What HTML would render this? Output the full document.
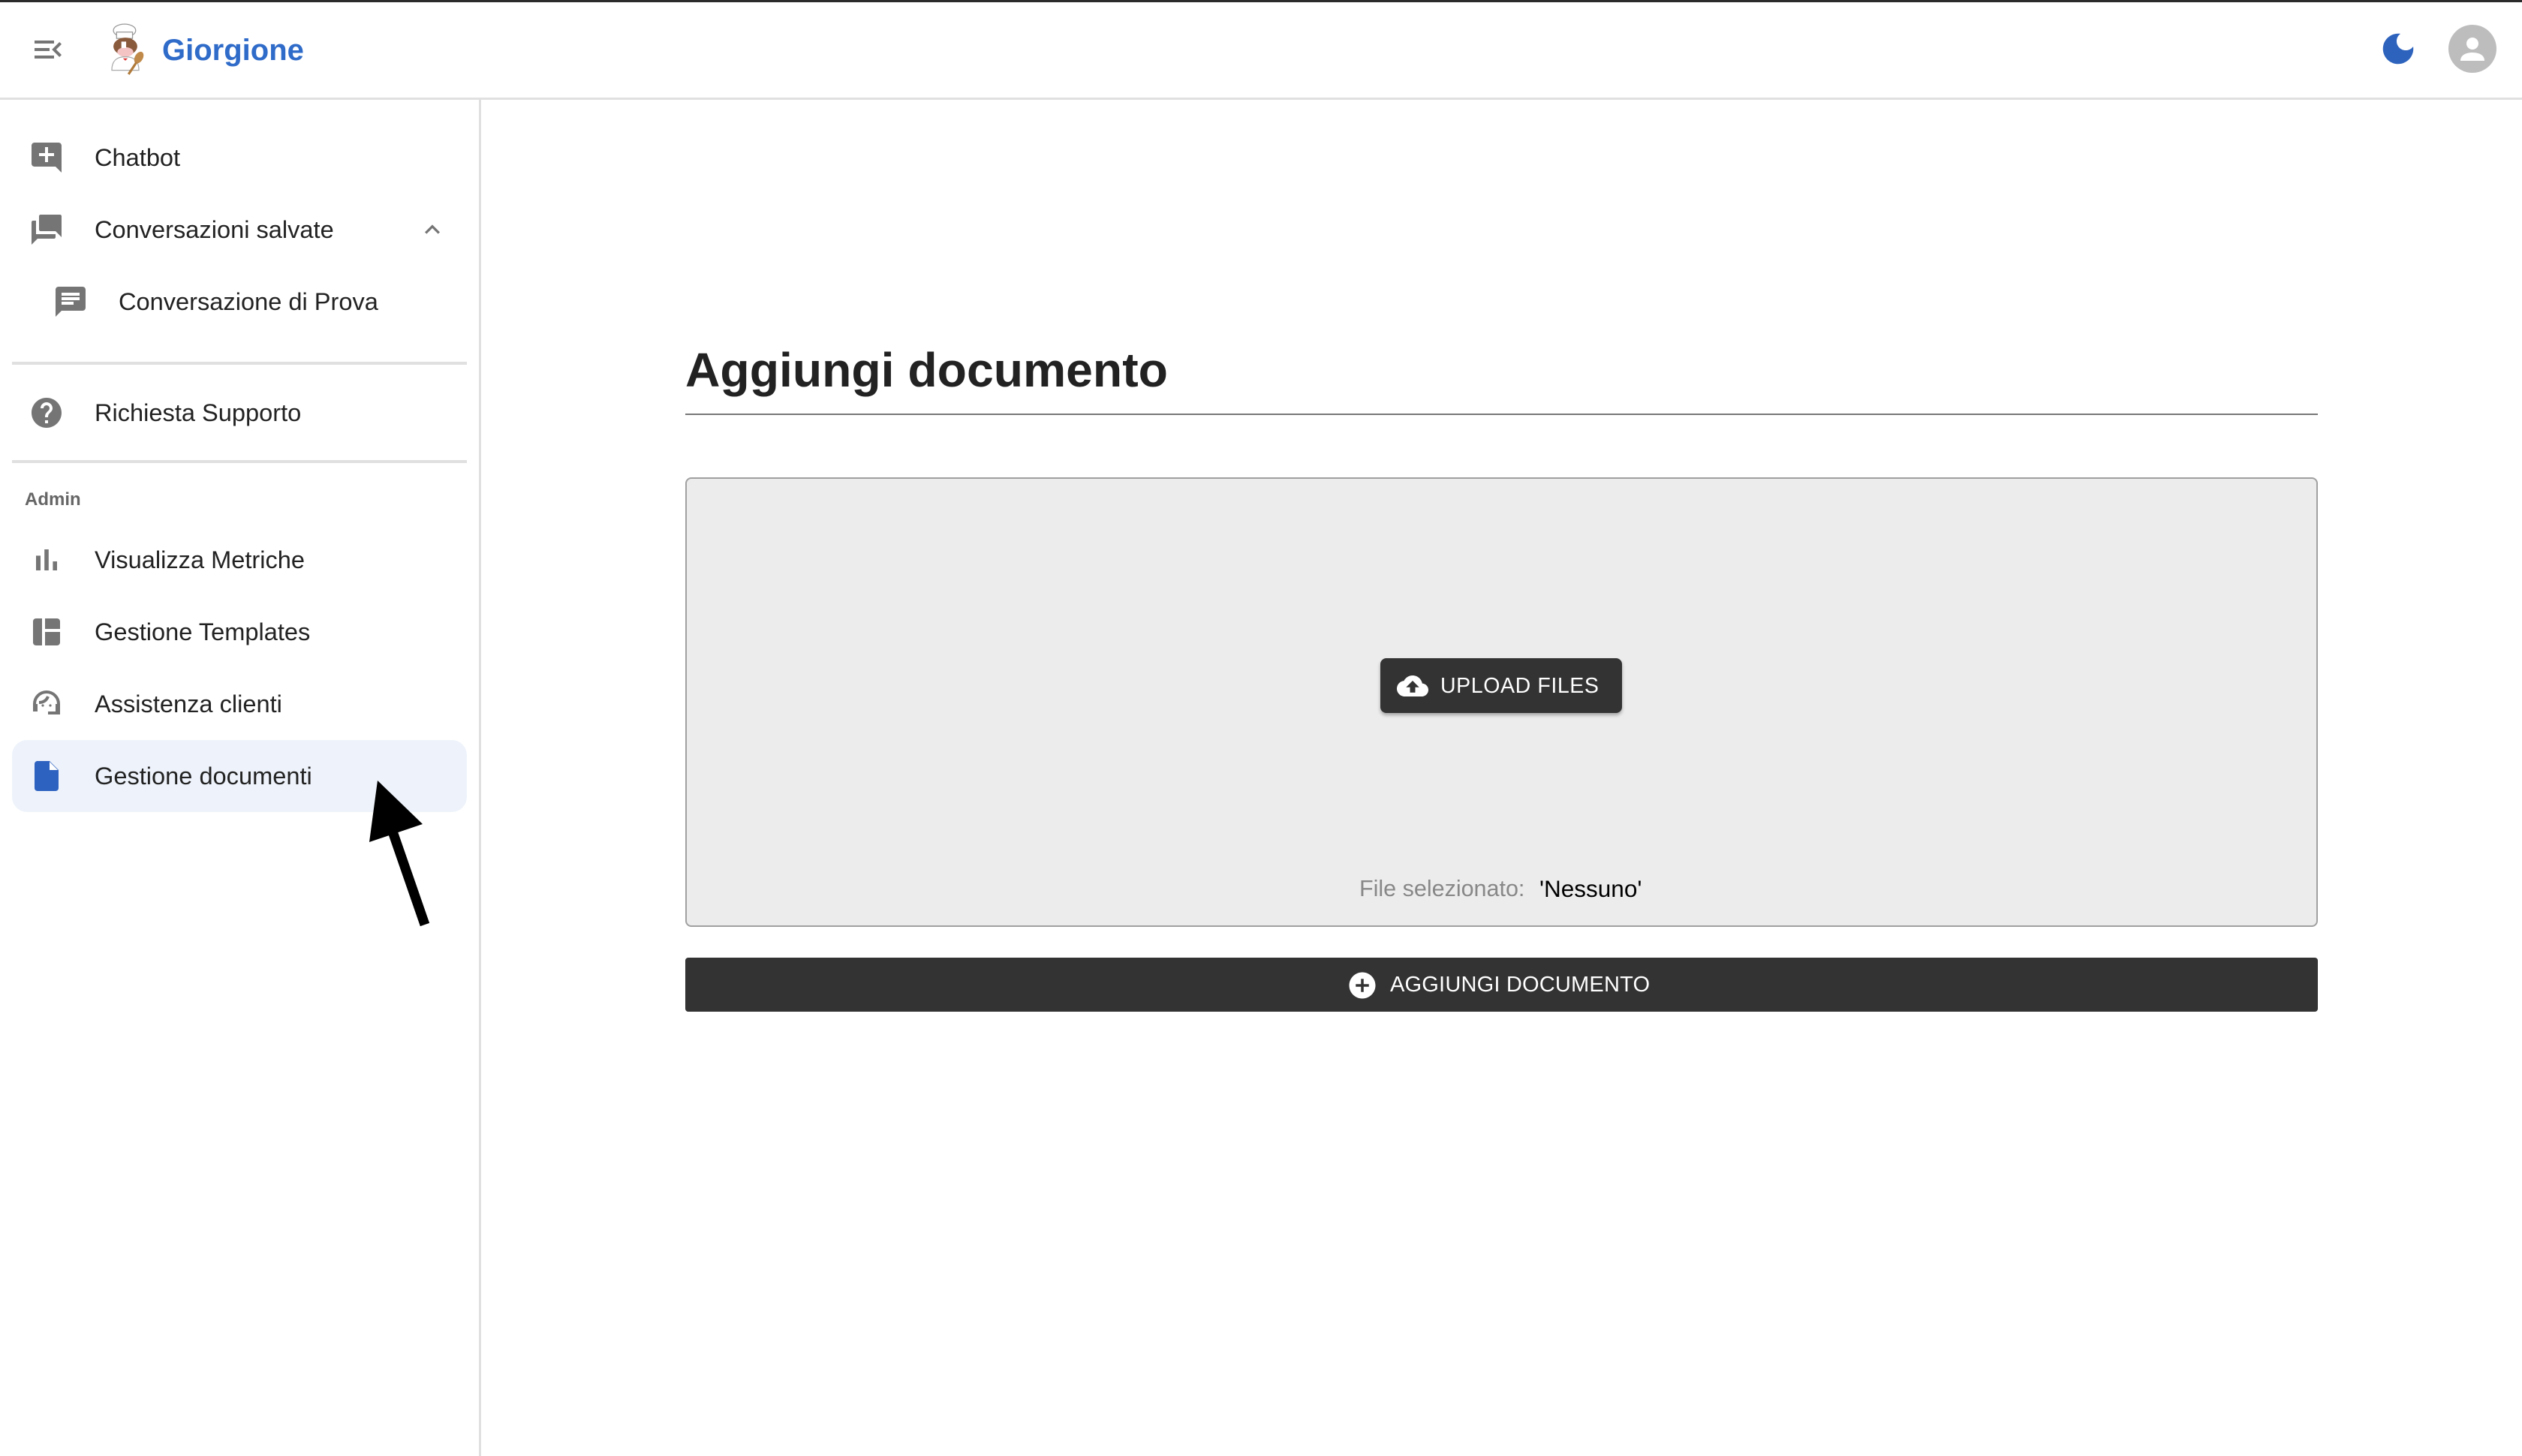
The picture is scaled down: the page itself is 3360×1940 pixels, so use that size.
<!DOCTYPE html>
<html><head><meta charset="utf-8"><style>
*{margin:0;padding:0;box-sizing:border-box}
body{width:3360px;height:1940px;background:#fff;font-family:"Liberation Sans",Arial,sans-serif;position:relative;overflow:hidden;color:#222}
.a{position:absolute}
.t{position:absolute;font-size:32.6px;line-height:40px;color:#222;white-space:nowrap}
svg.i{position:absolute;width:48px;height:48px;fill:#757575}
</style></head><body>
<div class="a" style="left:0;top:0;width:3360px;height:3px;background:#2b2b2b"></div>
<div class="a" style="left:0;top:130px;width:3360px;height:3px;background:#e0e0e0"></div>
<div class="a" style="left:638px;top:130px;width:3px;height:1810px;background:#e0e0e0"></div>

<svg class="i" style="left:40px;top:42px" viewBox="0 0 24 24"><path d="M3 18h13v-2H3v2zm0-5h10v-2H3v2zm0-7v2h13V6H3zm18 9.59L17.42 12 21 8.41 19.59 7l-5 5 5 5L21 15.59z"/></svg>
<svg class="a" style="left:138px;top:30px" width="58" height="70" viewBox="0 0 54 66">
<ellipse cx="26" cy="10" rx="14" ry="8" fill="#fff" stroke="#999" stroke-width="1.2"/>
<rect x="16" y="12" width="20" height="8" fill="#fff" stroke="#999" stroke-width="1.2"/>
<ellipse cx="27" cy="30" rx="15" ry="11" fill="#8a5a3c"/>
<ellipse cx="27" cy="37" rx="10" ry="6" fill="#f4c4c4"/>
<rect x="22" y="24" width="6" height="8" fill="#fff"/>
<path d="M10 60c0-12 6-17 17-17s17 5 17 17z" fill="#fff" stroke="#aaa" stroke-width="1.2"/>
<path d="M24 45l3 3 3-3z" fill="#d33"/>
<ellipse cx="44" cy="44" rx="5" ry="8" fill="#c08a4a" transform="rotate(30 44 44)"/>
<path d="M41 50l-10 15" stroke="#b07a3a" stroke-width="3"/>
</svg>
<div class="a" style="left:216px;top:42px;font-size:40px;line-height:50px;font-weight:bold;color:#2f6bc9">Giorgione</div>

<svg class="a" style="left:3168px;top:38px" width="54" height="54" viewBox="0 0 24 24" fill="#2e63bd"><path d="M12 3c-4.97 0-9 4.03-9 9s4.03 9 9 9 9-4.03 9-9c0-.46-.04-.92-.1-1.36-.98 1.37-2.58 2.26-4.4 2.26-2.98 0-5.4-2.42-5.4-5.4 0-1.81.89-3.42 2.26-4.4-.44-.06-.9-.1-1.36-.1z"/></svg>
<svg class="a" style="left:3262px;top:33px" width="64" height="64" viewBox="0 0 64 64"><circle cx="32" cy="32" r="32" fill="#bdbdbd"/><circle cx="32" cy="25" r="8" fill="#fff"/><path d="M16 48c0-8 8-11 16-11s16 3 16 11z" fill="#fff"/></svg>

<svg class="i" style="left:38px;top:186px;transform:scaleX(-1)" viewBox="0 0 24 24"><path d="M20 2H4c-1.1 0-1.99.9-1.99 2L2 22l4-4h14c1.1 0 2-.9 2-2V4c0-1.1-.9-2-2-2zm-3 9h-4v4h-2v-4H7V9h4V5h2v4h4v2z"/></svg>
<div class="t" style="left:126px;top:190px">Chatbot</div>

<svg class="i" style="left:38px;top:282px;transform:scaleX(-1)" viewBox="0 0 24 24"><path d="M21 6h-2v9H6v2c0 .55.45 1 1 1h11l4 4V7c0-.55-.45-1-1-1zm-4 6V3c0-.55-.45-1-1-1H3c-.55 0-1 .45-1 1v14l4-4h10c.55 0 1-.45 1-1z"/></svg>
<div class="t" style="left:126px;top:286px">Conversazioni salvate</div>
<svg class="a" style="left:556px;top:286px" width="40" height="40" viewBox="0 0 24 24" fill="#757575"><path d="M12 8l-6 6 1.41 1.41L12 10.83l4.59 4.58L18 14z"/></svg>

<svg class="i" style="left:70px;top:378px" viewBox="0 0 24 24"><path d="M20 2H4c-1.1 0-1.99.9-1.99 2L2 22l4-4h14c1.1 0 2-.9 2-2V4c0-1.1-.9-2-2-2zM6 9h12v2H6V9zm8 5H6v-2h8v2zm4-6H6V6h12v2z"/></svg>
<div class="t" style="left:158px;top:382px">Conversazione di Prova</div>

<div class="a" style="left:16px;top:482px;width:606px;height:4px;background:#e0e0e0"></div>

<svg class="i" style="left:38px;top:526px" viewBox="0 0 24 24"><path d="M12 2C6.48 2 2 6.48 2 12s4.48 10 10 10 10-4.48 10-10S17.52 2 12 2zm1 17h-2v-2h2v2zm2.07-7.75-.9.92C13.45 12.9 13 13.5 13 15h-2v-.5c0-1.1.45-2.1 1.17-2.830l1.24-1.26c.37-.36.59-.86.59-1.41 0-1.1-.9-2-2-2s-2 .9-2 2H8c0-2.21 1.79-4 4-4s4 1.79 4 4c0 .88-.36 1.68-.93 2.25z"/></svg>
<div class="t" style="left:126px;top:530px">Richiesta Supporto</div>

<div class="a" style="left:16px;top:613px;width:606px;height:4px;background:#e0e0e0"></div>

<div class="a" style="left:33px;top:652px;font-size:24px;line-height:28px;font-weight:bold;color:#666">Admin</div>

<svg class="i" style="left:38px;top:722px" viewBox="0 0 24 24"><path d="M5 9.2h3V19H5zM10.6 5h2.8v14h-2.8zm5.6 8H19v6h-2.8z"/></svg>
<div class="t" style="left:126px;top:726px">Visualizza Metriche</div>

<svg class="i" style="left:38px;top:818px" viewBox="0 0 24 24"><path d="M9 21H5c-1.1 0-2-.9-2-2V5c0-1.1.9-2 2-2h4v18zm2 0h8c1.1 0 2-.9 2-2v-7h-10v9zm10-11V5c0-1.1-.9-2-2-2h-8v7h10z"/></svg>
<div class="t" style="left:126px;top:822px">Gestione Templates</div>

<svg class="a" style="left:38px;top:914px" width="48" height="48" viewBox="0 0 24 24" fill="none" stroke="#757575" stroke-width="2"><path d="M4 14v-2a8 8 0 0 1 16 0v2"/><path d="M7 11c3 0 5-1.5 6-4"/><rect x="3" y="12" width="3" height="5" fill="#757575" stroke="none"/><rect x="18" y="12" width="3" height="5" fill="#757575" stroke="none"/><path d="M20 16v2h-7"/><circle cx="9.5" cy="13" r=".8" fill="#757575" stroke="none"/><circle cx="14.5" cy="13" r=".8" fill="#757575" stroke="none"/></svg>
<div class="t" style="left:126px;top:918px">Assistenza clienti</div>

<div class="a" style="left:16px;top:986px;width:606px;height:96px;background:#eef3fb;border-radius:20px"></div>
<svg class="i" style="left:38px;top:1010px" viewBox="0 0 24 24"><path fill="#2e62c0" d="M14 2H6c-1.1 0-2 .9-2 2v16c0 1.1.9 2 2 2h12c1.1 0 2-.9 2-2V8l-6-6z"/><path fill="#fff" d="M14 2.5V8h5.5z"/></svg>
<div class="t" style="left:126px;top:1014px">Gestione documenti</div>

<svg class="a" style="left:0;top:0" width="700" height="1300"><line x1="566" y1="1232" x2="522" y2="1105" stroke="#000" stroke-width="13"/><polygon points="503,1040 492,1122 563,1098" fill="#000"/></svg>

<div class="a" style="left:913px;top:455px;font-size:64.3px;line-height:76px;font-weight:bold;color:#222">Aggiungi documento</div>
<div class="a" style="left:913px;top:551px;width:2175px;height:2px;background:#777"></div>

<div class="a" style="left:913px;top:636px;width:2175px;height:599px;background:#ececec;border:2px solid #a0a0a0;border-radius:8px"></div>

<div class="a" style="left:1839px;top:877px;width:322px;height:73px;background:#333;border-radius:8px;box-shadow:0 3px 5px rgba(0,0,0,.3)"></div>
<svg class="a" style="left:1861px;top:893px" width="42" height="42" viewBox="0 0 24 24" fill="#fff"><path d="M19.35 10.04C18.67 6.59 15.64 4 12 4 9.11 4 6.64 5.640 5.4 8.04 2.34 8.36 0 10.91 0 14c0 3.31 2.69 6 6 6h13c2.76 0 5-2.24 5-5 0-2.64-2.05-4.78-4.65-4.96zM14 13v4h-4v-4H7l5-5 5 5h-3z"/></svg>
<div class="a" style="left:1919px;top:896px;font-size:28.5px;line-height:36px;color:#fff;letter-spacing:.6px">UPLOAD FILES</div>

<div class="a" style="left:1811px;top:1165px;font-size:30.5px;line-height:38px;color:#888">File selezionato:</div>
<div class="a" style="left:2051px;top:1165px;font-size:31.5px;line-height:38px;color:#000">'Nessuno'</div>

<div class="a" style="left:913px;top:1276px;width:2175px;height:72px;background:#333;border-radius:4px"></div>
<svg class="a" style="left:1794px;top:1292px" width="42" height="42" viewBox="0 0 24 24" fill="#fff"><path d="M12 2C6.48 2 2 6.48 2 12s4.48 10 10 10 10-4.48 10-10S17.52 2 12 2zm5 11h-4v4h-2v-4H7v-2h4V7h2v4h4v2z"/></svg>
<div class="a" style="left:1852px;top:1294px;font-size:29px;line-height:36px;color:#fff;letter-spacing:.2px">AGGIUNGI DOCUMENTO</div>
</body></html>
